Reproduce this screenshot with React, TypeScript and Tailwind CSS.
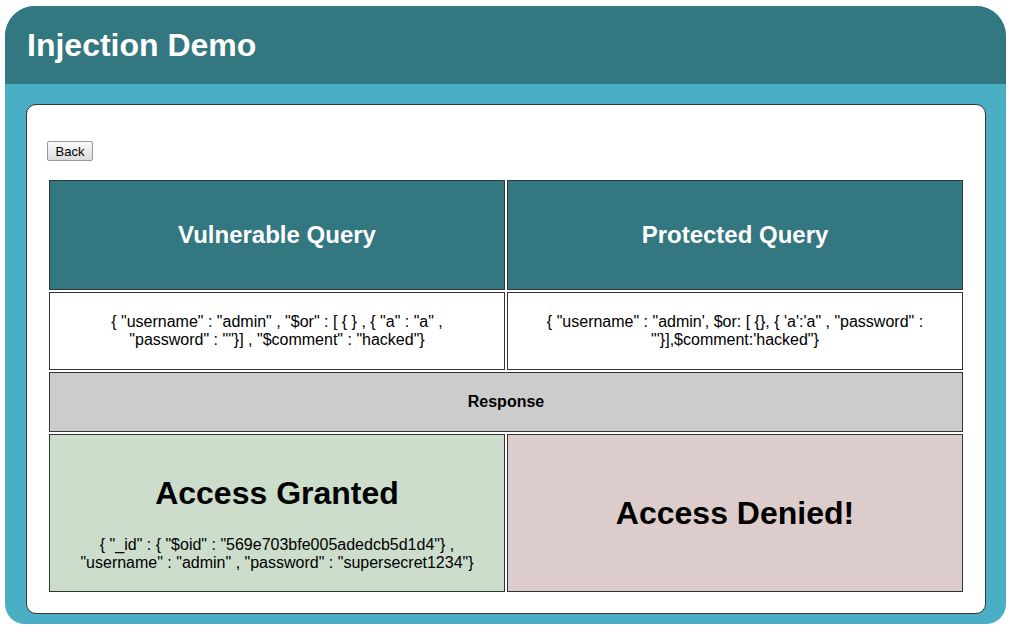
import React from 'react';

const font = { fontFamily: '"Liberation Sans", Arial, sans-serif' };

const App: React.FC = () => {
  return (
    <div className="min-h-[640px] bg-white pt-[6px] pl-[5px] text-black" style={font}>
      <div className="w-[1001px] rounded-t-[30px] rounded-b-[20px] overflow-hidden bg-[#4aafc4]">
        {/* Header */}
        <div className="h-[78px] bg-[#337780] flex items-center pl-[22px]">
          <h1 className="text-[32px] leading-[37px] font-bold text-white">Injection Demo</h1>
        </div>

        {/* Body */}
        <div className="pl-[21px] pr-[20px] pt-[20px] pb-[10px]">
          <div className="bg-white border border-[#333] rounded-[10px] px-[20px] pt-[36px] pb-[19px]">
            <button className="block w-[46px] h-[20px] mb-[17px] text-[13px] leading-none border border-[#999] rounded-[2px] bg-gradient-to-b from-[#fafafa] to-[#dcdcdc] text-black">
              Back
            </button>

            <div className="grid grid-cols-2 gap-[2px] p-[2px]">
              <div className="h-[110px] border border-[#333] bg-[#337780] flex items-center justify-center">
                <span className="text-[24px] font-bold text-white">Vulnerable Query</span>
              </div>
              <div className="h-[110px] border border-[#333] bg-[#337780] flex items-center justify-center">
                <span className="text-[24px] font-bold text-white">Protected Query</span>
              </div>

              <div className="h-[78px] border border-[#333] bg-white flex items-center justify-center px-[30px] text-center text-[16px] leading-[18px]">
                {'{ "username" : "admin" , "$or" : [ { } , { "a" : "a" , "password" : ""}] , "$comment" : "hacked"}'}
              </div>
              <div className="h-[78px] border border-[#333] bg-white flex items-center justify-center px-[30px] text-center text-[16px] leading-[18px]">
                {'{ "username" : "admin\', $or: [ {}, { \'a\':\'a" , "password" : "\'}],$comment:\'hacked"}'}
              </div>

              <div className="col-span-2 h-[60px] border border-[#333] bg-[#cccccc] flex items-center justify-center">
                <span className="text-[16px] font-bold">Response</span>
              </div>

              <div className="h-[158px] border border-[#333] bg-[#ccddcc] flex flex-col items-center pt-[40px] px-[30px] text-center">
                <h2 className="text-[32px] leading-[37px] font-bold mb-[24px]">Access Granted</h2>
                <p className="text-[16px] leading-[18px]">
                  {'{ "_id" : { "$oid" : "569e703bfe005adedcb5d1d4"} , "username" : "admin" , "password" : "supersecret1234"}'}
                </p>
              </div>
              <div className="h-[158px] border border-[#333] bg-[#ddcccc] flex items-center justify-center">
                <h2 className="text-[32px] leading-[37px] font-bold">Access Denied!</h2>
              </div>
            </div>
          </div>
        </div>
      </div>
    </div>
  );
};

export default App;
